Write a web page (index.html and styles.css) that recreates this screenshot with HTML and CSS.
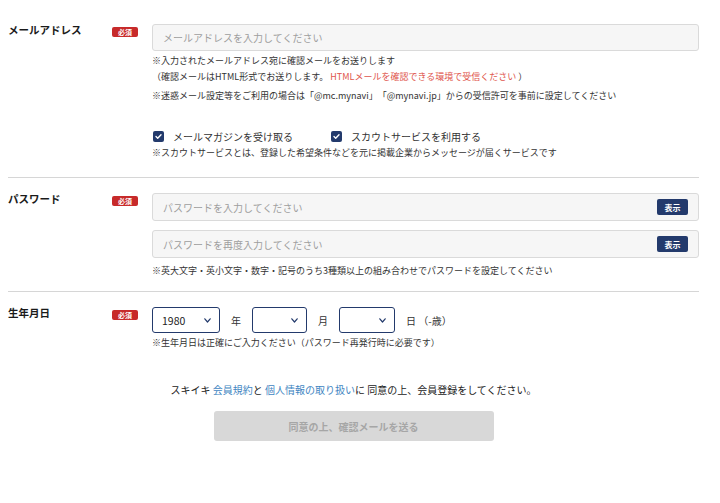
FILE: index.html
```html
<!DOCTYPE html>
<html lang="ja">
<head>
  <meta charset="utf-8">
  <link rel="stylesheet" href="styles.css">
</head>
<body>
  <div class="form">
    <div class="row row-mail">
      <div class="label">メールアドレス</div>
      <div><span class="badge">必須</span></div>
      <div class="field">
        <input type="text" class="text-input" placeholder="メールアドレスを入力してください">
        <p class="note note-first">※入力されたメールアドレス宛に確認メールをお送りします<br>（確認メールはHTML形式でお送りします。 <span class="warn">HTMLメールを確認できる環境で受信ください</span> ）</p>
        <p class="note note-spam">※迷惑メール設定等をご利用の場合は「@mc.mynavi」「@mynavi.jp」からの受信許可を事前に設定してください</p>

        <div class="check-group">
          <label class="check-label">
            <input type="checkbox" checked>
            メールマガジンを受け取る
          </label>
          <label class="check-label">
            <input type="checkbox" checked>
            スカウトサービスを利用する
          </label>
        </div>
        <p class="note note-scout">※スカウトサービスとは、登録した希望条件などを元に掲載企業からメッセージが届くサービスです</p>
      </div>
    </div>

    <div class="row row-pass">
      <div class="label">パスワード</div>
      <div><span class="badge">必須</span></div>
      <div class="field">
        <div class="pw-box">
          <input type="password" placeholder="パスワードを入力してください">
          <button class="show-btn">表示</button>
        </div>
        <div class="pw-box pw-second">
          <input type="password" placeholder="パスワードを再度入力してください">
          <button class="show-btn">表示</button>
        </div>
        <p class="note note-pass">※英大文字・英小文字・数字・記号のうち3種類以上の組み合わせでパスワードを設定してください</p>
      </div>
    </div>

    <div class="row row-birth">
      <div class="label">生年月日</div>
      <div><span class="badge">必須</span></div>
      <div class="field">
        <div class="date-group">
          <select class="date-select year">
            <option selected>1980</option>
          </select>
          <span class="unit">年</span>
          <select class="date-select month">
            <option selected></option>
          </select>
          <span class="unit">月</span>
          <select class="date-select day">
            <option selected></option>
          </select>
          <span class="unit">日 （-歳）</span>
        </div>
        <p class="note note-birth">※生年月日は正確にご入力ください（パスワード再発行時に必要です）</p>
      </div>
    </div>

    <div class="agree">
      <p class="agree-text">スキイキ <a href="#">会員規約</a>と <a href="#">個人情報の取り扱い</a>に 同意の上、会員登録をしてください。</p>
      <button class="submit" disabled>同意の上、確認メールを送る</button>
    </div>
  </div>
</body>
</html>
```

FILE: styles.css
```css
body {
  margin: 0;
  padding: 0;
  font-family: "Noto Sans CJK JP", "Noto Sans", sans-serif;
  color: #222222;
  background: white;
  text-spacing-trim: space-all;
}
p {
  margin: 0;
}
.form {
  padding: 0 21px 0 8px;
}
.row {
  display: grid;
  grid-template-columns: 103px 41px 1fr;
  align-items: start;
}
.row-mail {
  padding: 24px 0 16px;
  border-bottom: 1px solid #d6d6d6;
}
.row-pass {
  padding: 15px 0 12px;
  border-bottom: 1px solid #d6d6d6;
}
.row-birth {
  padding: 15px 0 0;
}
.label {
  font-size: 10.5px;
  font-weight: 700;
  line-height: 14px;
  margin-top: -1px;
  color: #1a1a1a;
}
.badge {
  display: block;
  margin: 3px 0 0 1px;
  width: 26px;
  height: 10px;
  line-height: 10px;
  background: #c72a2a;
  color: white;
  font-size: 7px;
  font-weight: 700;
  text-align: center;
  border-radius: 2px;
}
.field {
  display: flex;
  flex-direction: column;
}
.text-input {
  box-sizing: border-box;
  width: 100%;
  height: 27px;
  padding: 0 10px;
  border: 1px solid #dadada;
  border-radius: 3px;
  background: #f6f6f6;
  font-family: inherit;
  font-size: 10px;
  outline: none;
}
.text-input::placeholder,
.pw-box input::placeholder {
  color: #9e9e9e;
}
.note {
  font-size: 9px;
  line-height: 16px;
  color: #333333;
}
.note-first {
  margin-top: 2px;
}
.note-spam {
  margin-top: 3px;
}
.warn {
  color: #e0554c;
}
.check-group {
  display: flex;
  gap: 37px;
  margin-top: 25px;
  height: 15px;
  align-items: center;
}
.check-label {
  display: flex;
  align-items: center;
  gap: 9px;
  font-size: 10px;
  color: #333333;
  cursor: pointer;
}
.check-label input[type="checkbox"] {
  appearance: none;
  margin: 0 0 0 1px;
  width: 11px;
  height: 11px;
  border-radius: 2px;
  background: #233a6c url("data:image/svg+xml,%3Csvg width='11' height='11' viewBox='0 0 11 11' xmlns='http://www.w3.org/2000/svg'%3E%3Cpath d='M3 5.6L4.7 7.2L8 3.8' fill='none' stroke='white' stroke-width='1.4' stroke-linecap='round' stroke-linejoin='round'/%3E%3C/svg%3E") no-repeat center;
  cursor: pointer;
}
.note-scout {
  margin-top: 1px;
}
.pw-box {
  box-sizing: border-box;
  display: flex;
  align-items: center;
  height: 28px;
  padding: 0 10px;
  border: 1px solid #dadada;
  border-radius: 3px;
  background: #f6f6f6;
}
.pw-second {
  margin-top: 9px;
}
.pw-box input {
  flex: 1;
  border: none;
  background: transparent;
  font-family: inherit;
  font-size: 10px;
  padding: 0;
  outline: none;
}
.show-btn {
  width: 31px;
  height: 16px;
  padding: 0;
  border: none;
  border-radius: 2px;
  background: #233a6c;
  color: white;
  font-family: inherit;
  font-size: 8px;
  font-weight: 700;
  cursor: pointer;
}
.note-pass {
  margin-top: 5px;
}
.date-group {
  display: flex;
  align-items: center;
  gap: 11px;
  height: 26px;
}
.date-select {
  box-sizing: border-box;
  height: 26px;
  padding: 0 9px;
  border: 1.5px solid #233a6c;
  border-radius: 3px;
  appearance: none;
  font-family: inherit;
  font-size: 10.5px;
  color: #222222;
  background: white url("data:image/svg+xml,%3Csvg width='7' height='5' viewBox='0 0 7 5' xmlns='http://www.w3.org/2000/svg'%3E%3Cpath d='M0.8 0.8L3.5 4L6.2 0.8' fill='none' stroke='%23233a6c' stroke-width='1.2' stroke-linecap='round' stroke-linejoin='round'/%3E%3C/svg%3E") no-repeat;
  background-position: right 8px center;
  cursor: pointer;
}
.year {
  width: 68px;
}
.month {
  width: 55px;
}
.day {
  width: 56px;
}
.unit {
  font-size: 10px;
  color: #333333;
}
.note-birth {
  margin-top: 2px;
}
.agree {
  display: flex;
  flex-direction: column;
  align-items: center;
  margin-top: 32px;
}
.agree-text {
  font-size: 10px;
  line-height: 14px;
  color: #222222;
}
.agree-text a {
  color: #3f86c2;
  text-decoration: none;
}
.submit {
  margin-top: 14px;
  width: 280px;
  height: 30px;
  border: none;
  border-radius: 3px;
  background: #d8d8d8;
  color: #a6a6a6;
  font-family: inherit;
  font-size: 10px;
  font-weight: 700;
}
```
